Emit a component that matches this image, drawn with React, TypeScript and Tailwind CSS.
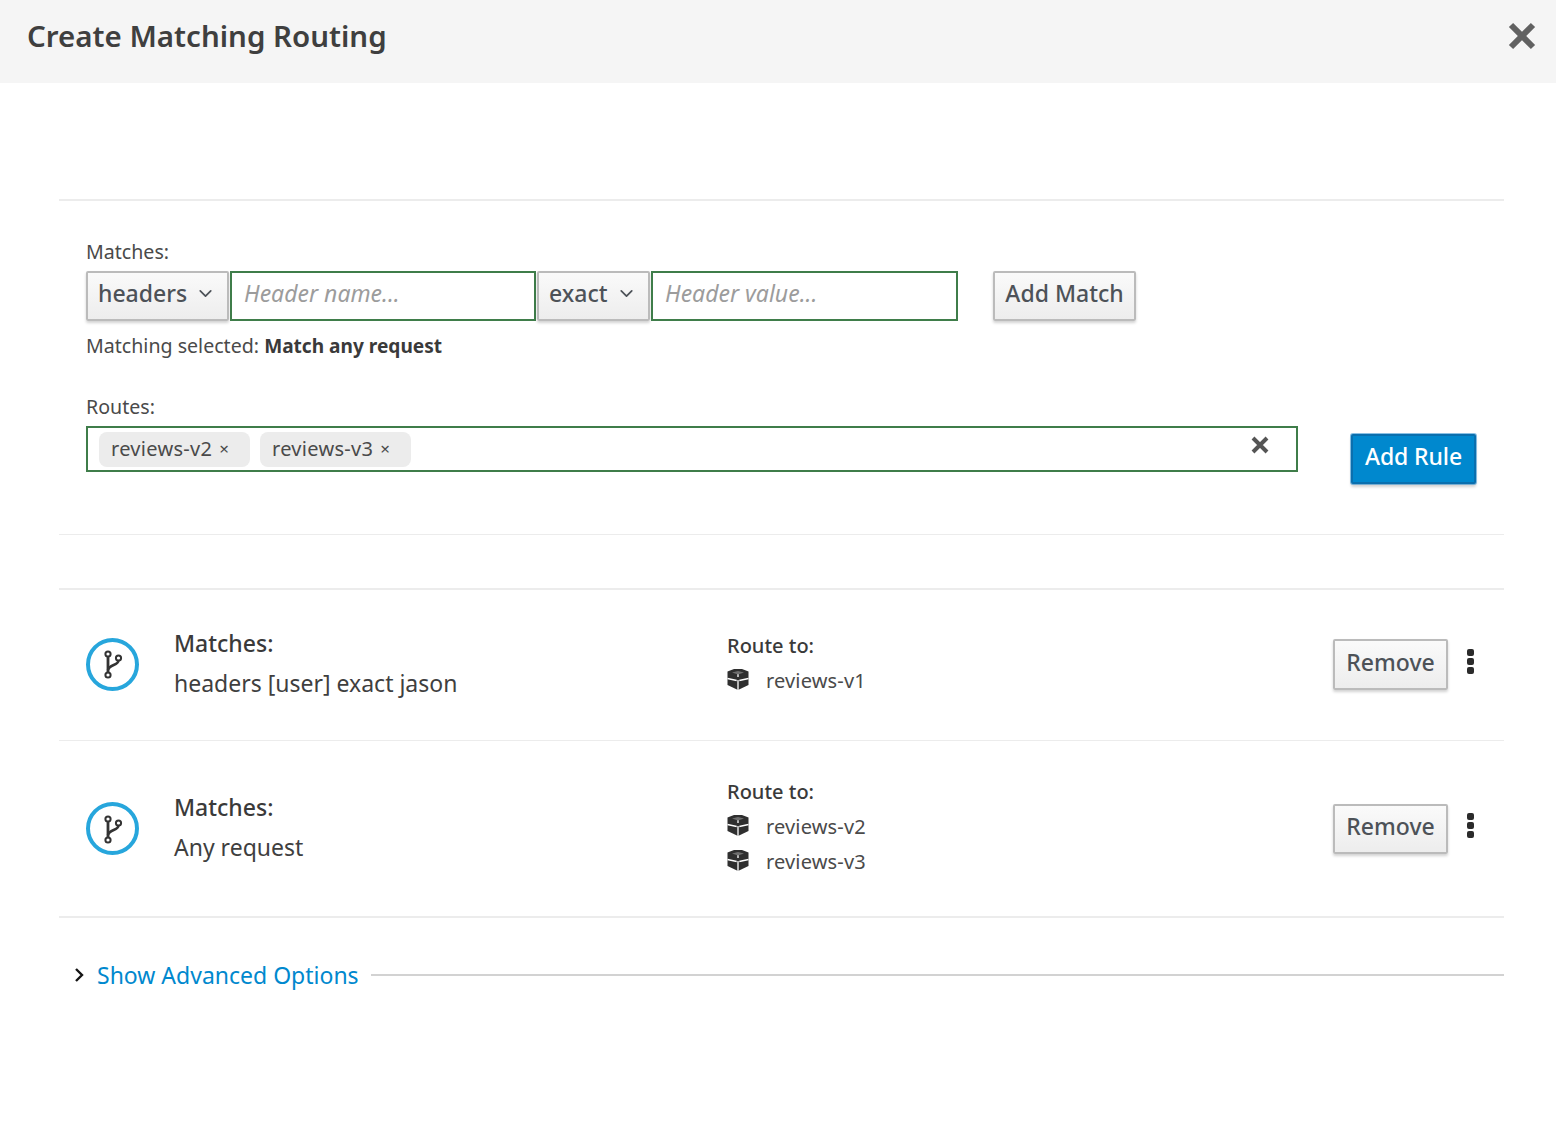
import { ChevronDown } from 'lucide-react';

const FONT = "font-['Noto_Sans','Open_Sans',sans-serif]";

const BranchIcon = () => (
  <div className="flex h-[53px] w-[53px] shrink-0 items-center justify-center rounded-full border-[4px] border-[#27a6dc]">
    <svg width="28" height="34" viewBox="0 0 28 34" fill="none" stroke="#333333" strokeWidth="2">
      <circle cx="9" cy="7" r="2.6" />
      <circle cx="19.5" cy="11" r="2.6" />
      <circle cx="9" cy="28" r="2.6" />
      <path d="M9 10v15" strokeWidth="2.8" />
      <path d="M19.5 13.5c0 5-9.5 4-10.5 9.5" strokeWidth="2.6" />
    </svg>
  </div>
);

const BundleIcon = () => (
  <svg width="22" height="21" viewBox="0 0 22 21" className="-mt-[3px] shrink-0">
    <path d="M7 0h8l6.5 2.6V16L11 21 .5 16V2.6z" fill="#2f2f2f" />
    <path d="M.5 9.5l9.2 2M12.3 11.5l9.2-2M11 11v10M11 4.5v3.5" fill="none" stroke="#ffffff" strokeWidth="1.3" />
    <path d="M5 3.6 11 2l6 1.6L11 5.4z" fill="#6e6e6e" />
  </svg>
);

const Kebab = () => (
  <div className="flex flex-col gap-[2px]">
    <span className="h-[7px] w-[7px] rounded-[2px] bg-[#2b2b2b]" />
    <span className="h-[7px] w-[7px] rounded-[2px] bg-[#2b2b2b]" />
    <span className="h-[7px] w-[7px] rounded-[2px] bg-[#2b2b2b]" />
  </div>
);

const greyButton =
  'border-2 border-[#bbbbbb] bg-gradient-to-b from-[#fafafa] to-[#ededed] text-[#4d5258] shadow-[0_2px_3px_rgba(0,0,0,0.18)] rounded-[2px] text-[23px] font-medium';

const Dropdown = ({ label, width }: { label: string; width: string }) => (
  <button className={`${greyButton} ${width} flex h-[50px] items-center justify-between pb-[5px] pl-[10px] pr-[11px]`}>
    <span>{label}</span>
    <ChevronDown size={21} strokeWidth={2} />
  </button>
);

const HeaderInput = ({ placeholder, width }: { placeholder: string; width: string }) => (
  <input
    placeholder={placeholder}
    readOnly
    className={`${width} h-[50px] border-2 border-[#3f7d4a] bg-white pb-[6px] pl-[12px] text-[23px] italic outline-none placeholder:text-[#9c9c9c]`}
  />
);

const Chip = ({ label }: { label: string }) => (
  <span className="flex h-[35px] w-[151px] items-center rounded-[8px] bg-[#ececec] pl-[12px] text-[20px] tracking-[0.3px] text-[#4a4a4a]">
    {label}
    <span className="ml-[7px] text-[17px]">×</span>
  </span>
);

const RouteRow = ({
  match,
  routes,
  className,
  matchClass,
  iconClass,
  removeClass,
}: {
  match: string;
  routes: string[];
  className: string;
  matchClass: string;
  iconClass: string;
  removeClass: string;
}) => (
  <div className={`flex items-center pl-[27px] pr-[30px] ${className}`}>
    <div className={iconClass}>
      <BranchIcon />
    </div>
    <div className={`ml-[35px] w-[553px] ${matchClass}`}>
      <div className="text-[23px] font-medium leading-[32px] text-[#3a3a3a]">Matches:</div>
      <div className="mt-[8px] text-[23px] leading-[32px] text-[#3f3f3f]">{match}</div>
    </div>
    <div className="-mt-[3px] flex-1">
      <div className="text-[20px] font-medium leading-[28px] text-[#3a3a3a]">Route to:</div>
      {routes.map((r) => (
        <div key={r} className="mt-[7px] flex h-[28px] items-center gap-[17px] text-[20px] tracking-[0.15px] text-[#4a4a4a]">
          <BundleIcon />
          {r}
        </div>
      ))}
    </div>
    <button className={`${greyButton} w-[115px] ${removeClass}`}>Remove</button>
    <div className="-mt-[7px] ml-[19px]">
      <Kebab />
    </div>
  </div>
);

export default function App() {
  return (
    <div className={`${FONT} min-h-[1121px] bg-white text-[#3a3a3a]`}>
      {/* Header */}
      <div className="flex h-[83px] items-center justify-between bg-[#f5f5f5] pb-[10px] pl-[27px] pr-[20px]">
        <h1 className="text-[29.5px] font-semibold text-[#3f3f3f]">Create Matching Routing</h1>
        <svg width="28" height="28" viewBox="0 0 28 28" stroke="#616161" strokeWidth="6" className="mt-[-1px]">
          <path d="M3 3l22 22M25 3 3 25" />
        </svg>
      </div>

      <div className="mx-[59px] mt-[116px] w-[1445px]">
        {/* Rule form */}
        <div className="flex h-[336px] flex-col border-y-2 border-y-[#ececec] px-[27px] pt-[37px] [border-bottom-width:1px]">
          <div className="text-[19.6px] leading-[28px] text-[#4a4a4a]">Matches:</div>
          <div className="mt-[5px] flex gap-[1px]">
            <Dropdown label="headers" width="w-[143px]" />
            <HeaderInput placeholder="Header name..." width="w-[306px]" />
            <Dropdown label="exact" width="w-[113px]" />
            <HeaderInput placeholder="Header value..." width="w-[307px]" />
            <button className={`${greyButton} ml-[34px] h-[50px] w-[143px] pb-[5px]`}>Add Match</button>
          </div>
          <div className="mt-[11px] text-[19.6px] leading-[28px] text-[#4a4a4a]">
            Matching selected: <span className="text-[19.1px] font-bold text-[#3a3a3a]">Match any request</span>
          </div>
          <div className="mt-[33px] text-[19.6px] leading-[28px] text-[#4a4a4a]">Routes:</div>
          <div className="mt-[5px] flex items-start">
            <div className="relative flex h-[46px] w-[1212px] items-center gap-[10px] border-2 border-[#3f7d4a] pl-[11px]">
              <Chip label="reviews-v2" />
              <Chip label="reviews-v3" />
              <svg width="18" height="18" viewBox="0 0 18 18" stroke="#555" strokeWidth="4" className="absolute right-[27px] top-[8px]">
                <path d="M2 2l14 14M16 2 2 16" />
              </svg>
            </div>
            <button className="ml-[53px] mt-[8px] h-[50px] w-[125px] rounded-[2px] border-2 border-[#0a6fae] bg-[#0088ce] pb-[5px] text-[23px] font-medium tracking-[-0.1px] text-white shadow-[0_0_0_1px_rgba(60,150,210,0.6),0_3px_3px_rgba(0,0,0,0.18)]">
              Add Rule
            </button>
          </div>
        </div>

        {/* Existing rules */}
        <div className="mt-[53px] border-t-2 border-t-[#ececec]">
          <RouteRow
            match="headers [user] exact jason"
            routes={['reviews-v1']}
            className="h-[151px] border-b border-b-[#ececec]"
            matchClass="-mt-[5px]"
            iconClass="-mt-[2px]"
            removeClass="-mt-[2px] h-[51px] pb-[3px]"
          />
          <RouteRow
            match="Any request"
            routes={['reviews-v2', 'reviews-v3']}
            className="h-[177px] border-b-2 border-b-[#ececec]"
            matchClass="-mt-[4px]"
            iconClass=""
            removeClass="mt-[1px] h-[50px] pb-[5px]"
          />
        </div>

        {/* Advanced */}
        <div className="mt-[40px] flex items-center pl-[11px]">
          <svg width="18" height="18" viewBox="0 0 18 18" fill="none" stroke="#151515" strokeWidth="2.4">
            <path d="M6 3l6 6-6 6" />
          </svg>
          <span className="ml-[9px] text-[23px] text-[#0088ce]">Show Advanced Options</span>
          <div className="ml-[12px] h-[2px] flex-1 bg-[#d2d2d2]" />
        </div>
      </div>
    </div>
  );
}
